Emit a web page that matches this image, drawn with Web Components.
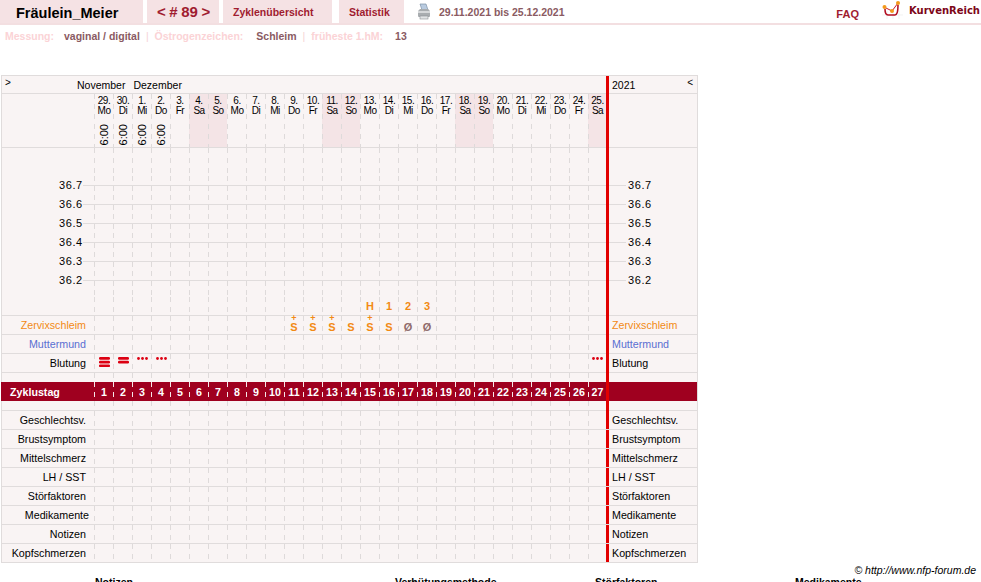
<!DOCTYPE html>
<html lang="de">
<head>
<meta charset="utf-8">
<title>Fräulein_Meier</title>
<style>
    html { overflow: hidden; }
    body { margin: 0; background: #fff; color: #000; font: 11px "Liberation Sans", Arial, sans-serif; }
</style>
</head>
<body>
<app-header></app-header>
<info-bar></info-bar>
<cycle-chart></cycle-chart>
<page-footer></page-footer>

<script>
const DAYS = [29, 30, 1, 2, 3, 4, 5, 6, 7, 8, 9, 10, 11, 12, 13, 14, 15, 16, 17, 18, 19, 20, 21, 22, 23, 24, 25];
const WEEK = ['Mo', 'Di', 'Mi', 'Do', 'Fr', 'Sa', 'So'];
const GRID = '92px repeat(26, 19px) 18px 3px 1fr';

class AppHeader extends HTMLElement {
    constructor() {
        super();
        this.attachShadow({ mode: 'open' });
        this.shadowRoot.innerHTML = `
            <style>
                :host {
                    display: flex;
                    height: 23px;
                    border-bottom: 2px solid #f3dfe1;
                    font: bold 10.5px "Liberation Sans", Arial, sans-serif;
                    color: #a01c30;
                }
                .tab {
                    display: flex;
                    align-items: center;
                    box-sizing: border-box;
                    background: #f5e2e4;
                }
                .name { width: 143px; padding: 2px 0 0 16px; margin-right: 4px; color: #000; font-size: 14.5px; }
                .nav { width: 72px; padding-left: 10px; margin-right: 4px; font-size: 15px; word-spacing: -.6px; }
                .cycles { width: 109px; padding-left: 10px; margin-right: 7px; }
                .stats { width: 65px; padding-left: 10px; margin-right: 13px; }
                .printer { margin: 3px 8px 0 0; }
                .range { color: #8a5a62; line-height: 25px; }
                .faq { margin-left: auto; line-height: 29px; margin-right: 23px; font-size: 11px; }
                .logo { margin: 0 6px 0 0; }
                .brand {
                    font: bold 10px "DejaVu Sans", Verdana, sans-serif;
                    color: #7c0618;
                    line-height: 21px;
                    margin-right: 1px;
                }
            </style>
            <div class="tab name">Fräulein_Meier</div>
            <div class="tab nav">&lt; # 89 &gt;</div>
            <div class="tab cycles">Zyklenübersicht</div>
            <div class="tab stats">Statistik</div>
            <svg class="printer" width="14" height="17" viewBox="0 0 14 17">
                <path d="M3 1h6l2 6H5z" fill="#b9cbe0" stroke="#7f93a8" stroke-width=".7"/>
                <path d="M1 8l2-2h8l2 2v5a1 1 0 0 1-1 1H2a1 1 0 0 1-1-1z" fill="#a9adb0"/>
                <rect x="1" y="8" width="12" height="2" fill="#d6d8da"/>
                <rect x="3" y="13" width="8" height="3" fill="#e2e4e6" stroke="#8d9194" stroke-width=".6"/>
            </svg>
            <div class="range">29.11.2021 bis 25.12.2021</div>
            <div class="faq">FAQ</div>
            <svg class="logo" width="21" height="19" viewBox="0 0 21 19">
                <path d="M0 15h21M5 11v8M11 11v8M17 11v8" stroke="#ececec" stroke-width=".7" fill="none"/>
                <path d="M3 9c0 3 1 6 3 6h7c2 0 3-3 3-10" stroke="#b30f22" stroke-width="1.6" fill="none"/>
                <path d="M2 7l8 4 6-8" stroke="#c81e28" stroke-width="1" fill="none"/>
                <circle cx="2.5" cy="7" r="2" fill="#f39a1c"/>
                <circle cx="10" cy="11" r="2" fill="#f39a1c"/>
                <circle cx="16" cy="3" r="2" fill="#f39a1c"/>
            </svg>
            <div class="brand">KurvenReich</div>
        `;
    }
}

class InfoBar extends HTMLElement {
    constructor() {
        super();
        this.attachShadow({ mode: 'open' });
        this.shadowRoot.innerHTML = `
            <style>
                :host {
                    display: flex;
                    height: 22px;
                    padding-left: 5px;
                    align-items: center;
                    font: bold 10.5px "Liberation Sans", Arial, sans-serif;
                    color: #8a5a62;
                    white-space: pre;
                }
                .key { color: #fbd3d6; font-weight: bold; }
                .sep { color: #f6d3d6; font-weight: normal; margin: 0 6px; }
            </style>
            <span class="key">Messung:</span>
            <span style="margin-left:10px">vaginal / digital</span>
            <span class="sep">|</span>
            <span class="key">Östrogenzeichen:</span>
            <span style="margin-left:13px">Schleim</span>
            <span class="sep">|</span>
            <span class="key">früheste 1.hM:</span>
            <span style="margin-left:12px">13</span>
        `;
    }
}

// one line of the chart: label column, 27 day cells, red marker, right label
class ChartRow extends HTMLElement {
    constructor() {
        super();
        this.attachShadow({ mode: 'open' });
    }

    connectedCallback() {
        const label = this.getAttribute('label') || '';
        const tail = this.getAttribute('tail') === null ? label : this.getAttribute('tail');
        const scale = this.getAttribute('scale');
        let cells = '';
        for (let i = 1; i <= 27; i++) {
            cells += `<div class="day"><slot name="d${i}"></slot></div>`;
        }
        const left = scale ? `<div class="side scale"><b>${scale}</b><i></i></div>` : `<div class="side label">${label}</div>`;
        const right = scale ? `<div class="side scale"><i></i><b>${scale}</b></div>` : `<div class="side tail">${tail}</div>`;
        this.shadowRoot.innerHTML = `
            <style>
                :host {
                    --line: #e0dcdc;
                    --dash: #dedada;
                    display: grid;
                    box-sizing: border-box;
                    grid-template-columns: ${GRID};
                    height: var(--h, 19px);
                    border-bottom: 1px solid var(--line);
                    background: #f9f4f4;
                    font: 10.7px "Liberation Sans", Arial, sans-serif;
                    color: var(--tone, #000);
                }
                :host([open]) { border-bottom: 0; }
                :host([band]) {
                    --dash: #f5e6e8;
                    background: #9f001f;
                    box-shadow: -1px 0 0 #9f001f;
                    border-bottom: 0;
                    color: #fff;
                    font-weight: bold;
                }
                .side { display: flex; align-items: center; white-space: nowrap; min-width: 0; }
                .label { justify-content: flex-end; padding-right: var(--pad, 8px); }
                :host([band]) .label { justify-content: flex-start; padding-left: 8px; }
                .tail { padding-left: 3px; }
                .scale { letter-spacing: .6px; font-size: 11px; }
                .scale b { font-weight: normal; padding-bottom: 2px; }
                .scale i { flex: 1; height: 1px; background: var(--line); }
                .scale b:first-child { margin-left: 57px; }
                .scale i:first-child { flex: 0 0 17px; }
                .scale i:first-child + b { margin-left: 2px; }
                .day {
                    position: relative;
                    display: flex;
                    align-items: center;
                    justify-content: center;
                    padding-left: 1px;
                    background: linear-gradient(var(--dash) 50%, transparent 0) left var(--ph, 0) / 1px 10px repeat-y;
                }
                :host([scale]) .day {
                    background:
                        linear-gradient(var(--dash) 50%, transparent 0) left var(--ph, 0) / 1px 10px repeat-y,
                        linear-gradient(var(--line), var(--line)) center / 100% 1px no-repeat;
                }
                .red { background: #e20000; margin-bottom: -1px; }
                :host([open]) .red, :host([cut]) .red, :host([band]) .red { margin-bottom: 0; }
            </style>
            ${left}${cells}<div class="red"></div>${right}
        `;
    }
}

class CervixMark extends HTMLElement {
    constructor() {
        super();
        this.attachShadow({ mode: 'open' });
    }

    connectedCallback() {
        const plus = this.hasAttribute('plus') ? '<span class="plus">+</span>' : '';
        this.shadowRoot.innerHTML = `
            <style>
                :host {
                    position: relative;
                    display: block;
                    color: var(--mark, #f28a14);
                    font: bold 11px "Liberation Sans", Arial, sans-serif;
                    line-height: 11px;
                    padding-top: var(--pt, 5px);
                }
                .plus {
                    position: absolute;
                    left: 0;
                    right: 0;
                    top: -3px;
                    text-align: center;
                    font-size: 9px;
                    line-height: 8px;
                }
            </style>
            ${plus}<span>${this.getAttribute('value')}</span>
        `;
    }
}

class BleedMark extends HTMLElement {
    constructor() {
        super();
        this.attachShadow({ mode: 'open' });
    }

    connectedCallback() {
        const level = Number(this.getAttribute('level'));
        let shapes = '';
        if (level === 1) {
            shapes = '<circle cx="1.5" cy="3.5" r="1.4"/><circle cx="5.5" cy="3.5" r="1.4"/><circle cx="9.5" cy="3.5" r="1.4"/>';
        } else {
            for (let i = 0; i < level - 1; i++) {
                shapes += `<rect x="0" y="${2 + i * 3.7}" width="11" height="2.7" rx="1.2"/>`;
            }
        }
        this.shadowRoot.innerHTML = `
            <style>
                :host { display: block; height: 15px; margin-bottom: 1px; }
                svg { display: block; fill: #dc0012; }
            </style>
            <svg width="11" height="15" viewBox="0 0 11 15">${shapes}</svg>
        `;
    }
}

class CycleChart extends HTMLElement {
    constructor() {
        super();
        this.attachShadow({ mode: 'open' });
    }

    connectedCallback() {
        let dates = '';
        DAYS.forEach((d, i) => {
            const name = WEEK[i % 7];
            const off = name === 'Sa' || name === 'So';
            const time = i < 4 ? '<span class="time">6:00</span>' : '';
            dates += `<div class="date${off ? ' off' : ''}"><span>${d}.<br>${name}</span>${time}</div>`;
        });
        let numbers = '';
        for (let i = 1; i <= 27; i++) numbers += `<span slot="d${i}">${i}</span>`;
        this.shadowRoot.innerHTML = `
            <style>
                :host {
                    display: block;
                    width: 695px;
                    margin: 28px 0 0 1px;
                    border: 1px solid #e0dcdc;
                    border-bottom: 0;
                    background: #f9f4f4;
                    font: 10.5px "Liberation Sans", Arial, sans-serif;
                }
                .months {
                    display: grid;
                    grid-template-columns: 604px 3px 88px;
                    height: 18px;
                    box-sizing: border-box;
                    border-bottom: 1px solid #e0dcdc;
                }
                .months .left { display: flex; align-items: center; padding-left: 3px; gap: 8px; white-space: pre; }
                .months .go { width: 64px; align-self: flex-start; font-size: 10px; line-height: 14px; }
                .months .right { display: flex; align-items: center; justify-content: space-between; padding: 0 4px 0 3px; }
                .months .right .go { width: auto; }
                .red { background: #e20000; margin-bottom: -1px; }
                .dates {
                    display: grid;
                    grid-template-columns: ${GRID};
                    height: 54px;
                    box-sizing: border-box;
                    border-bottom: 1px solid #e0dcdc;
                }
                .date {
                    display: flex;
                    flex-direction: column;
                    align-items: center;
                    padding: 2px 0 0 1px;
                    font-size: 10px;
                    line-height: 10px;
                    letter-spacing: -.5px;
                    text-align: center;
                    background: linear-gradient(#dedada 50%, transparent 0) left 0 / 1px 10px repeat-y;
                }
                .off { background: linear-gradient(#dedada 50%, transparent 0) left 0 / 1px 10px repeat-y, #f4e4e6; }
                .time {
                    writing-mode: vertical-rl;
                    transform: rotate(180deg);
                    margin-top: 8px;
                    font-size: 11px;
                    line-height: 12px;
                    letter-spacing: 0;
                }
            </style>
            <div class="months">
                <div class="left"><span class="go">&gt;</span><span>November</span><span>Dezember</span></div>
                <div class="red"></div>
                <div class="right"><span>2021</span><span class="go">&lt;</span></div>
            </div>
            <div class="dates">
                <div></div>${dates}<div class="red"></div><div></div>
            </div>
            <chart-row open style="--h:28px"></chart-row>
            <chart-row open scale="36.7"></chart-row>
            <chart-row open scale="36.6"></chart-row>
            <chart-row open scale="36.5"></chart-row>
            <chart-row open scale="36.4"></chart-row>
            <chart-row open scale="36.3"></chart-row>
            <chart-row open scale="36.2"></chart-row>
            <chart-row open style="--h:7px"></chart-row>
            <chart-row style="--pt:1px">
                <cervix-mark slot="d15" value="H"></cervix-mark>
                <cervix-mark slot="d16" value="1"></cervix-mark>
                <cervix-mark slot="d17" value="2"></cervix-mark>
                <cervix-mark slot="d18" value="3"></cervix-mark>
            </chart-row>
            <chart-row label="Zervixschleim" style="--tone:#f28a14">
                <cervix-mark slot="d11" value="S" plus></cervix-mark>
                <cervix-mark slot="d12" value="S" plus></cervix-mark>
                <cervix-mark slot="d13" value="S" plus></cervix-mark>
                <cervix-mark slot="d14" value="S"></cervix-mark>
                <cervix-mark slot="d15" value="S" plus></cervix-mark>
                <cervix-mark slot="d16" value="S"></cervix-mark>
                <cervix-mark slot="d17" value="Ø" style="--mark:#8f6b6b"></cervix-mark>
                <cervix-mark slot="d18" value="Ø" style="--mark:#8f6b6b"></cervix-mark>
            </chart-row>
            <chart-row label="Muttermund" style="--tone:#5a6fd2"></chart-row>
            <chart-row label="Blutung">
                <bleed-mark slot="d1" level="4"></bleed-mark>
                <bleed-mark slot="d2" level="3"></bleed-mark>
                <bleed-mark slot="d3" level="1"></bleed-mark>
                <bleed-mark slot="d4" level="1"></bleed-mark>
                <bleed-mark slot="d27" level="1"></bleed-mark>
            </chart-row>
            <chart-row open style="--h:9px"></chart-row>
            <chart-row band label="Zyklustag" tail="" style="--h:19px">${numbers}</chart-row>
            <chart-row style="--h:10px"></chart-row>
            <chart-row cut label="Geschlechtsv."></chart-row>
            <chart-row cut label="Brustsymptom"></chart-row>
            <chart-row cut label="Mittelschmerz"></chart-row>
            <chart-row cut label="LH / SST"></chart-row>
            <chart-row cut label="Störfaktoren"></chart-row>
            <chart-row cut label="Medikamente" style="--pad:5px"></chart-row>
            <chart-row cut label="Notizen"></chart-row>
            <chart-row cut label="Kopfschmerzen"></chart-row>
        `;
    }
}

class PageFooter extends HTMLElement {
    constructor() {
        super();
        this.attachShadow({ mode: 'open' });
        this.shadowRoot.innerHTML = `
            <style>
                :host { display: block; font: 10.5px "Liberation Sans", Arial, sans-serif; }
                .copy { text-align: right; padding: 1px 5px 0 0; font-style: italic; line-height: 12px; }
                .heads {
                    display: grid;
                    grid-template-columns: repeat(4, 200px);
                    margin: 0 0 0 95px;
                    font-weight: bold;
                    line-height: 13px;
                }
            </style>
            <div class="copy">© http://www.nfp-forum.de</div>
            <div class="heads">
                <div>Notizen</div>
                <div style="margin-left:100px;white-space:nowrap">Verhütungsmethode</div>
                <div style="margin-left:100px">Störfaktoren</div>
                <div style="margin-left:100px">Medikamente</div>
            </div>
        `;
    }
}

customElements.define('app-header', AppHeader);
customElements.define('info-bar', InfoBar);
customElements.define('chart-row', ChartRow);
customElements.define('cervix-mark', CervixMark);
customElements.define('bleed-mark', BleedMark);
customElements.define('cycle-chart', CycleChart);
customElements.define('page-footer', PageFooter);
</script>
</body>
</html>
